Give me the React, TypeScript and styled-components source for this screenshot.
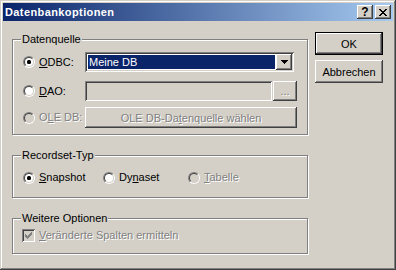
import React from 'react'
import styled, { createGlobalStyle } from 'styled-components'

const FACE = '#D4D0C8'
const SHADOW = '#808080'
const DARK = '#404040'
const LIGHT = '#FFFFFF'

const raised = `box-shadow: inset -1px -1px 0 ${DARK}, inset 1px 1px 0 ${LIGHT}, inset -2px -2px 0 ${SHADOW}, inset 2px 2px 0 ${FACE};`
const sunken = `box-shadow: inset 1px 1px 0 ${SHADOW}, inset -1px -1px 0 ${LIGHT}, inset 2px 2px 0 ${DARK}, inset -2px -2px 0 ${FACE};`

const Global = createGlobalStyle`
  body {
    margin: 0;
    background: #fff;
    font-family: Tahoma, "Liberation Sans", Arial, sans-serif;
    font-size: 11px;
  }
`

const Window = styled.div`
  width: 396px;
  height: 270px;
  box-sizing: border-box;
  padding: 3px;
  background: ${FACE};
  box-shadow: inset -1px -1px 0 ${DARK}, inset 1px 1px 0 ${FACE}, inset -2px -2px 0 ${SHADOW}, inset 2px 2px 0 ${LIGHT};
  color: #000;
`

const TitleBar = styled.div`
  height: 18px;
  display: flex;
  align-items: center;
  padding: 0 2px;
  background: linear-gradient(to right, #0A246A, #A6CAF0);
`

const Title = styled.div`
  flex: 1;
  color: #fff;
  font-weight: bold;
  font-size: 11px;
  letter-spacing: 0.4px;
  line-height: 13px;
`

const CaptionButton = styled.div<{ $gap?: number }>`
  width: 16px;
  height: 14px;
  margin-left: ${p => p.$gap ?? 0}px;
  background: ${FACE};
  ${raised}
  display: flex;
  align-items: center;
  justify-content: center;
  font-weight: bold;
  font-size: 12px;
  line-height: 12px;
`

const Client = styled.div`
  display: flex;
  padding: 11px 0 0 9px;
`

const Groups = styled.div`
  width: 296px;
  padding-top: 1px;
  display: flex;
  flex-direction: column;
  gap: 14px;
`

const Group = styled.fieldset`
  margin: 0;
  padding: 0;
  min-width: 0;
  border: 1px solid ${SHADOW};
  box-shadow: inset 1px 1px 0 ${LIGHT}, 1px 1px 0 ${LIGHT};
`

const Legend = styled.legend`
  margin-left: 8px;
  padding: 0 1px;
  line-height: 13px;
  background: ${FACE};
`

const GroupBody = styled.div<{ $top: number; $bottom: number; $left: number }>`
  padding: ${p => p.$top}px 0 ${p => p.$bottom}px ${p => p.$left}px;
  display: flex;
  flex-direction: column;
`

const Row = styled.div<{ $height: number; $gap?: number }>`
  display: flex;
  align-items: center;
  height: ${p => p.$height}px;
  margin-top: ${p => p.$gap ?? 0}px;
`

const Option = styled.div<{ $width?: number }>`
  display: flex;
  align-items: center;
  width: ${p => (p.$width ? `${p.$width}px` : 'auto')};
`

const Label = styled.span<{ $width?: number; $disabled?: boolean }>`
  margin-left: 4px;
  width: ${p => (p.$width ? `${p.$width}px` : 'auto')};
  line-height: 13px;
  white-space: nowrap;
  color: ${p => (p.$disabled ? SHADOW : '#000')};
  text-shadow: ${p => (p.$disabled ? `1px 1px 0 ${LIGHT}` : 'none')};
`

const Key = styled.span`
  text-decoration: underline;
`

const RadioOuter = styled.span`
  display: inline-block;
  flex: none;
  width: 12px;
  height: 12px;
  box-sizing: border-box;
  border-radius: 50%;
  border: 1px solid;
  border-color: ${SHADOW} ${LIGHT} ${LIGHT} ${SHADOW};
`

const RadioInner = styled.span<{ $checked?: boolean; $disabled?: boolean }>`
  display: block;
  position: relative;
  width: 10px;
  height: 10px;
  box-sizing: border-box;
  border-radius: 50%;
  border: 1px solid;
  border-color: ${DARK} ${FACE} ${FACE} ${DARK};
  background: ${p => (p.$disabled ? FACE : LIGHT)};
  &::after {
    content: ${p => (p.$checked ? '""' : 'none')};
    position: absolute;
    left: 2px;
    top: 2px;
    width: 4px;
    height: 4px;
    border-radius: 1.5px;
    background: #000;
  }
`

const Radio = ({ checked, disabled }: { checked?: boolean; disabled?: boolean }) => (
  <RadioOuter>
    <RadioInner $checked={checked} $disabled={disabled} />
  </RadioOuter>
)

const CheckBox = styled.span<{ $disabled?: boolean }>`
  flex: none;
  width: 13px;
  height: 13px;
  box-sizing: border-box;
  display: flex;
  align-items: center;
  justify-content: center;
  background: ${p => (p.$disabled ? FACE : LIGHT)};
  ${sunken}
`

const Combo = styled.div`
  width: 209px;
  height: 20px;
  box-sizing: border-box;
  padding: 2px;
  display: flex;
  background: ${LIGHT};
  ${sunken}
`

const Selection = styled.div`
  flex: 1;
  margin: 1px;
  padding-left: 1px;
  background: #0A246A;
  color: #fff;
  line-height: 14px;
`

const DropButton = styled.div`
  width: 16px;
  height: 16px;
  background: ${FACE};
  ${raised}
  display: flex;
  align-items: center;
  justify-content: center;
`

const Edit = styled.div<{ $width: number }>`
  width: ${p => p.$width}px;
  height: 20px;
  box-sizing: border-box;
  background: ${FACE};
  ${sunken}
`

const PushButton = styled.div<{ $width: number; $height: number; $gap?: number; $default?: boolean; $disabled?: boolean }>`
  width: ${p => p.$width}px;
  height: ${p => p.$height}px;
  margin-left: ${p => p.$gap ?? 0}px;
  box-sizing: border-box;
  background: ${FACE};
  border: ${p => (p.$default ? '1px solid #000' : 'none')};
  ${raised}
  display: flex;
  align-items: center;
  justify-content: center;
  white-space: nowrap;
  color: ${p => (p.$disabled ? SHADOW : '#000')};
  text-shadow: ${p => (p.$disabled ? `1px 1px 0 ${LIGHT}` : 'none')};
`

const ButtonColumn = styled.div`
  margin-left: 7px;
  display: flex;
  flex-direction: column;
  gap: 5px;
`

export default function App() {
  return (
    <>
      <Global />
      <Window>
        <TitleBar>
          <Title>Datenbankoptionen</Title>
          <CaptionButton>?</CaptionButton>
          <CaptionButton $gap={2}>
            <svg width="8" height="7" viewBox="0 0 8 7" shapeRendering="crispEdges">
              <path d="M0 0h2v1h-2zM6 0h2v1h-2zM1 1h2v1h-2zM5 1h2v1h-2zM2 2h4v1h-4zM3 3h2v1h-2zM2 4h4v1h-4zM1 5h2v1h-2zM5 5h2v1h-2zM0 6h2v1h-2zM6 6h2v1h-2z" fill="#000" />
            </svg>
          </CaptionButton>
        </TitleBar>
        <Client>
          <Groups>
            <Group>
              <Legend>Datenquelle</Legend>
              <GroupBody $top={6} $bottom={6} $left={10}>
                <Row $height={20}>
                  <Radio checked />
                  <Label $width={46}>
                    <Key>O</Key>DBC:
                  </Label>
                  <Combo>
                    <Selection>Meine DB</Selection>
                    <DropButton>
                      <svg width="7" height="4" viewBox="0 0 7 4" shapeRendering="crispEdges">
                        <path d="M0 0h7v1h-7zM1 1h5v1h-5zM2 2h3v1h-3zM3 3h1v1h-1z" fill="#000" />
                      </svg>
                    </DropButton>
                  </Combo>
                </Row>
                <Row $height={20} $gap={9}>
                  <Radio />
                  <Label $width={46}>
                    <Key>D</Key>AO:
                  </Label>
                  <Edit $width={187} />
                  <PushButton $width={24} $height={20} $gap={1} $disabled>
                    ...
                  </PushButton>
                </Row>
                <Row $height={21} $gap={6}>
                  <Radio disabled />
                  <Label $width={46} $disabled>
                    O<Key>L</Key>E DB:
                  </Label>
                  <PushButton $width={212} $height={21} $disabled>
                    OLE DB-Da<Key>t</Key>enquelle wählen
                  </PushButton>
                </Row>
              </GroupBody>
            </Group>
            <Group>
              <Legend>Recordset-Typ</Legend>
              <GroupBody $top={9} $bottom={13} $left={10}>
                <Row $height={13}>
                  <Option $width={80}>
                    <Radio checked />
                    <Label>
                      <Key>S</Key>napshot
                    </Label>
                  </Option>
                  <Option $width={85}>
                    <Radio />
                    <Label>
                      Dy<Key>n</Key>aset
                    </Label>
                  </Option>
                  <Option>
                    <Radio disabled />
                    <Label $disabled>
                      <Key>T</Key>abelle
                    </Label>
                  </Option>
                </Row>
              </GroupBody>
            </Group>
            <Group>
              <Legend>Weitere Optionen</Legend>
              <GroupBody $top={4} $bottom={11} $left={9}>
                <Row $height={13}>
                  <CheckBox $disabled>
                    <svg width="7" height="7" viewBox="0 0 7 7" shapeRendering="crispEdges">
                      <path d="M6 0h1v3h-1zM5 1h1v3h-1zM4 2h1v3h-1zM3 3h1v3h-1zM2 4h1v3h-1zM1 3h1v3h-1zM0 2h1v3h-1z" fill={SHADOW} />
                    </svg>
                  </CheckBox>
                  <Label $disabled>
                    <Key>V</Key>eränderte Spalten ermitteln
                  </Label>
                </Row>
              </GroupBody>
            </Group>
          </Groups>
          <ButtonColumn>
            <PushButton $width={68} $height={23} $default>
              OK
            </PushButton>
            <PushButton $width={68} $height={23}>
              Abbrechen
            </PushButton>
          </ButtonColumn>
        </Client>
      </Window>
    </>
  )
}
